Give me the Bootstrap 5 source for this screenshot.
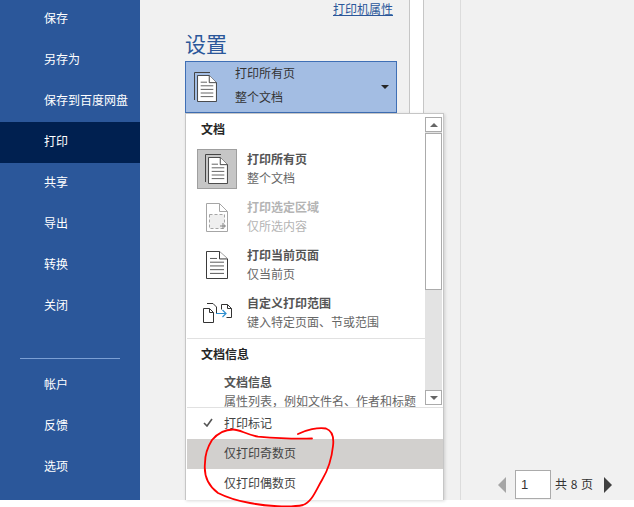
<!DOCTYPE html>
<html lang="zh">
<head>
<meta charset="utf-8">
<title>打印</title>
<link href="https://cdn.jsdelivr.net/npm/bootstrap@5.3.0/dist/css/bootstrap.min.css" rel="stylesheet">
<style>
html,body{height:507px;overflow:hidden;background:#fff}
body{font-family:"Noto Sans CJK SC","Liberation Sans",sans-serif;font-size:12px;line-height:16px;color:#444;position:relative}
.app{height:500px;overflow:hidden;background:#f1f1f1}
.side{width:140px;background:#2b579a;color:#fff;margin-top:-1px;flex:none}
.side-item{height:41px;padding:0 0 3px 44px;display:flex;align-items:center}
.side-item.on{background:#002050}
.side-rule{height:1px;background:#7b9fd4;margin:31px 20px 6px}
.set-col{width:270px;padding:0 16px 0 45px;border-right:1px solid #c6c6c6;flex:none}
.prop{height:17px;text-align:right;color:#2b579a;text-decoration:underline;line-height:17px}
.set-title{font-size:21px;line-height:24px;color:#2b579a;margin:14px 0 6px;font-weight:400}
.drop{height:52px;width:212px;background:#a3bde3;border:1px solid #3f6fb5;display:flex;align-items:center;color:#333}
.drop-ico{width:49px;padding-left:8px;flex:none}
.drop-txt{padding-bottom:4px}
.drop-txt div{line-height:24px}
.caret-d{margin-left:auto;margin-right:7px;width:0;height:0;border-left:4px solid transparent;border-right:4px solid transparent;border-top:4px solid #262626}
.strip{width:14px;background:#fff;border-right:1px solid #c6c6c6;flex:none}
.gap-col{width:37px;border-right:1px solid #dcdcdc;flex:none}
.right-col{flex:1;display:flex;flex-direction:column;justify-content:flex-end}
.pager{height:30px;display:flex;align-items:center;padding-left:37px;color:#333}
.arr-l{width:0;height:0;border-top:8px solid transparent;border-bottom:8px solid transparent;border-right:8px solid #a6a6a6;margin-right:9px}
.arr-r{width:0;height:0;border-top:8px solid transparent;border-bottom:8px solid transparent;border-left:8px solid #404040;margin-left:10px}
.pg-box{width:36px;height:29px;background:#fff;border:1px solid #ababab;padding-left:5px;line-height:27px;font-family:"Liberation Sans",sans-serif;font-size:13px;margin-right:4px;align-self:flex-start}
.pg-txt{letter-spacing:.5px;white-space:nowrap;padding-bottom:3px}
.menu{position:absolute;left:185px;top:113px;width:259px;height:387px;background:#fff;border:1px solid #c6c6c6;border-bottom:0;box-shadow:1px 1px 3px rgba(0,0,0,.15);overflow:hidden}
.upper{height:294px;display:flex;border-bottom:1px solid #e1e1e1;margin-left:1px}
.list-area{width:238px;height:293px;overflow:hidden;flex:none}
.head{height:31px;padding:0 0 2px 14px;font-weight:700;color:#262626;display:flex;align-items:center}
.head.h2nd{height:29px;padding-bottom:0}
.opt{height:48px;display:flex;align-items:center;color:#666}
.opt-ico{width:40px;height:40px;margin:0 10px;display:flex;align-items:center;justify-content:center;flex:none}
.opt-ico.sel{background:#c6c6c6;border:1px solid #9f9f9f}
.opt-txt{padding-bottom:2px}
.opt-txt.wide{margin-left:37px}
.opt b{display:block;font-weight:700;color:#555;line-height:19px}
.opt span{display:block;line-height:19px;color:#666;white-space:nowrap}
.opt.off b,.opt.off span{color:#b4b4b4}
.rule{height:1px;background:#e1e1e1;margin-top:1px}
.sbar{width:17px;margin-top:3px;background:#e3e3e3;height:288px;display:flex;flex-direction:column;justify-content:space-between}
.sb-btn{height:15px;display:flex;align-items:center;justify-content:center;background:#fff;border:1px solid #ababab}
.sb-thumb{height:157px;background:#fff;border:1px solid #ababab;margin-top:1px}
.up{width:0;height:0;border-left:4px solid transparent;border-right:4px solid transparent;border-bottom:4px solid #666}
.dn{width:0;height:0;border-left:4px solid transparent;border-right:4px solid transparent;border-top:4px solid #666}
.pick{height:30px;padding:0 0 2px 37px;display:flex;align-items:center;color:#444;position:relative;margin-left:1px}
.pick.first{height:31px}
.pick.hov{background:#d2d0ce}
.tick{position:absolute;left:16px;top:10px}
.scrib{position:absolute;left:0;top:0;width:634px;height:507px;pointer-events:none}
</style>
</head>
<body>
<svg width="0" height="0" class="position-absolute">
  <defs>
    <symbol id="doc" viewBox="0 0 22 30">
      <path d="M.5.5h13l8 8v21H.5z" fill="#fff" stroke="#333"/>
      <path d="M13.5.5v8h8" fill="#fff" stroke="#333"/>
      <path d="M4 8h7M4 12h14M4 16h14M4 20h14M4 24h14" stroke="#555"/>
    </symbol>
  </defs>
</svg>

<div class="app d-flex">
  <nav class="side">
    <div class="side-item">保存</div>
    <div class="side-item">另存为</div>
    <div class="side-item">保存到百度网盘</div>
    <div class="side-item on">打印</div>
    <div class="side-item">共享</div>
    <div class="side-item">导出</div>
    <div class="side-item">转换</div>
    <div class="side-item">关闭</div>
    <div class="side-rule"></div>
    <div class="side-item">帐户</div>
    <div class="side-item">反馈</div>
    <div class="side-item">选项</div>
  </nav>
  <section class="set-col">
    <div class="prop">打印机属性</div>
    <h2 class="set-title">设置</h2>
    <div class="drop">
      <div class="drop-ico">
        <svg width="24" height="31" viewBox="0 0 24 31"><path d="M.5 28V.5H16" fill="none" stroke="#444"/><use href="#doc" x="3" y="3" width="20" height="27"/></svg>
      </div>
      <div class="drop-txt"><div>打印所有页</div><div>整个文档</div></div>
      <div class="caret-d"></div>
    </div>
  </section>
  <div class="strip"></div>
  <div class="gap-col"></div>
  <div class="right-col">
    <div class="pager">
      <div class="arr-l"></div>
      <div class="pg-box">1</div>
      <div class="pg-txt">共 8 页</div>
      <div class="arr-r"></div>
    </div>
  </div>
</div>

<div class="menu">
  <div class="upper">
    <div class="list-area">
      <div class="head">文档</div>
      <div class="opt">
        <div class="opt-ico sel"><svg width="24" height="31" viewBox="0 0 24 31"><path d="M.5 28V.5H16" fill="none" stroke="#444"/><use href="#doc" x="3" y="3" width="20" height="27"/></svg></div>
        <div class="opt-txt"><b>打印所有页</b><span>整个文档</span></div>
      </div>
      <div class="opt off">
        <div class="opt-ico"><svg width="22" height="29" viewBox="0 0 22 29"><path d="M.5.5h13l8 8v20H.5z" fill="#fff" stroke="#a6a6a6"/><path d="M13.5.5v8h8" fill="none" stroke="#a6a6a6"/><path d="M3.5 11.5h15v14h-15z" fill="#efefef" stroke="#a6a6a6" stroke-dasharray="3 2"/><path d="M17 20v6M14 23h6" stroke="#888"/></svg></div>
        <div class="opt-txt"><b>打印选定区域</b><span>仅所选内容</span></div>
      </div>
      <div class="opt">
        <div class="opt-ico"><svg width="22" height="28" viewBox="0 0 22 30" preserveAspectRatio="none"><use href="#doc" width="22" height="30"/></svg></div>
        <div class="opt-txt"><b>打印当前页面</b><span>仅当前页</span></div>
      </div>
      <div class="opt">
        <div class="opt-ico"><svg width="29" height="20" viewBox="0 0 29 20"><path d="M4 .5h6l3.500 3.500v6" fill="none" stroke="#333"/><path d="M.5 5.500h6l4 4v10H.5z" fill="#fff" stroke="#333"/><path d="M6.500 5.500v4h4" fill="none" stroke="#333"/><path d="M18.500 1.500h6l4 4v9h-5M24.500 1.500v4h4M18.500 1.500v5" fill="none" stroke="#333"/><path d="M13 10.500h10M19.500 7l3.500 3.500-3.500 3.500" fill="none" stroke="#2e8fd0" stroke-width="1.200"/></svg></div>
        <div class="opt-txt"><b>自定义打印范围</b><span>键入特定页面、节或范围</span></div>
      </div>
      <div class="rule"></div>
      <div class="head h2nd">文档信息</div>
      <div class="opt">
        <div class="opt-txt wide"><b>文档信息</b><span>属性列表，例如文件名、作者和标题</span></div>
      </div>
    </div>
    <div class="sbar">
      <div>
        <div class="sb-btn"><div class="up"></div></div>
        <div class="sb-thumb"></div>
      </div>
      <div class="sb-btn"><div class="dn"></div></div>
    </div>
  </div>
  <div class="pick first">
    <svg class="tick" width="10" height="9" viewBox="0 0 10 9"><path d="M1 5l3 3 5-7" fill="none" stroke="#555" stroke-width="1.6"/></svg>
    打印标记
  </div>
  <div class="pick hov">仅打印奇数页</div>
  <div class="pick">仅打印偶数页</div>
</div>

<svg class="scrib" viewBox="0 0 634 507"><path d="M312 438.500C300 439 280 438.500 258 436.700C245 434 240 429.500 233 429.500C226 429.500 218 433 212 440C207 448 205 455 205 463C204 472 206 484 218 493C228 498 238 501 250 503C265 506 290 508 303 505C312 502 316 490 322 480C328 470 332 456 333 446C334 438 333 431 326 428.500C318 427 306 430 298 434" fill="none" stroke="#f00" stroke-width="1.800" stroke-linecap="round"/></svg>

<script src="https://cdn.jsdelivr.net/npm/bootstrap@5.3.0/dist/js/bootstrap.bundle.min.js"></script>
</body>
</html>
